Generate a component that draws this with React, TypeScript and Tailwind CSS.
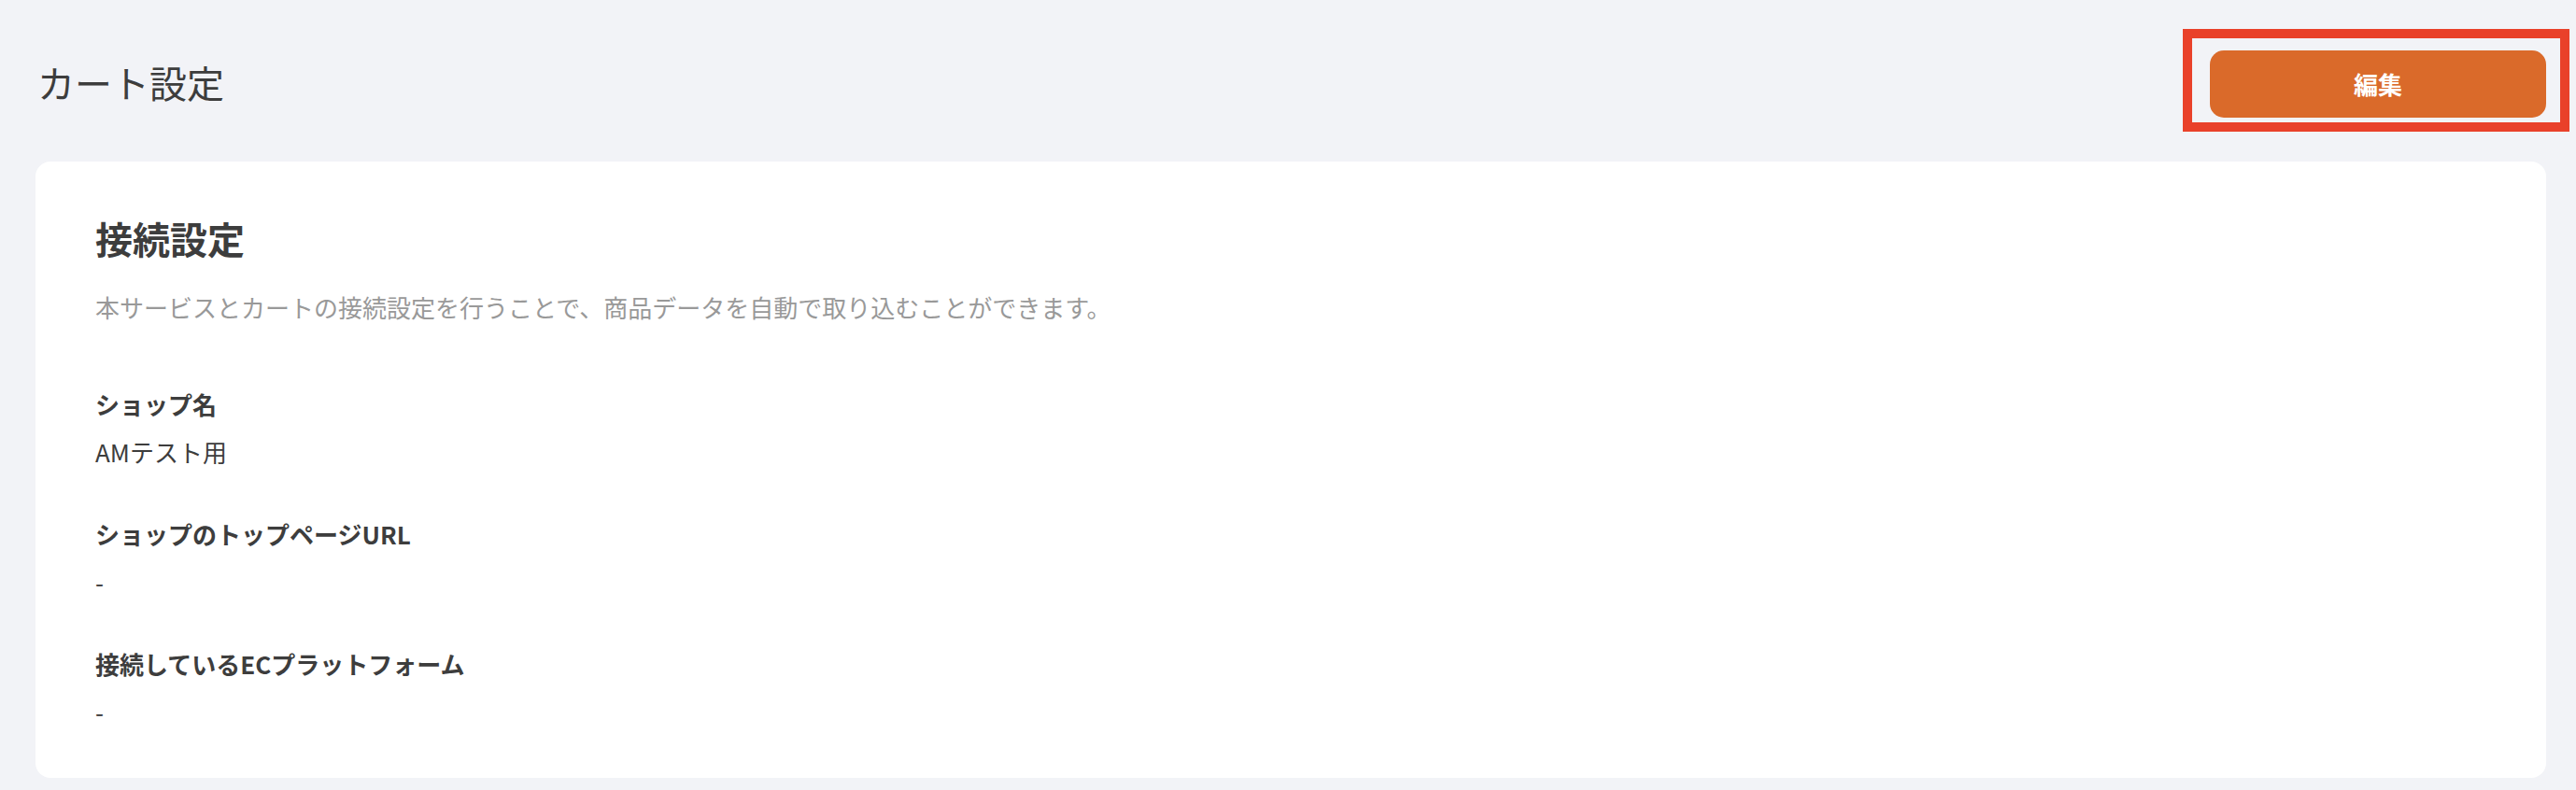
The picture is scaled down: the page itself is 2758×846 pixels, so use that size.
import React from 'react';

const FIELDS = [
  { label: 'ショップ名', value: 'AMテスト用' },
  { label: 'ショップのトップページURL', value: '-' },
  { label: '接続しているECプラットフォーム', value: '-' },
] as const;

const FONT = '[font-family:"Noto_Sans_CJK_JP","Noto_Sans",sans-serif]';

export default function App() {
  return (
    <div className={`min-h-[846px] bg-[#f2f3f7] pl-[38px] pr-[32px] pt-[54px] pb-[13px] text-[#3d3d3d] ${FONT}`}>
      {/* ヘッダー */}
      <div className="flex h-[72px] items-center justify-between">
        <h1 className="mb-[4px] pl-[2px] text-[40px] leading-[56px] font-normal text-[#3d3d3d]">カート設定</h1>
        <div className="relative">
          <button className="flex h-[72px] w-[360px] items-center justify-center rounded-[15px] bg-[#da6a2a] pb-[2px] text-[26px] font-bold text-white">
            編集
          </button>
          {/* 注釈の赤枠 */}
          <span className="pointer-events-none absolute -top-[23px] -right-[25px] -bottom-[15px] -left-[29px] border-[10px] border-[#e9412a]" />
        </div>
      </div>

      {/* 接続設定カード */}
      <div className="mt-[47px] rounded-[16px] bg-white px-[64px] pt-[62px] pb-[51px]">
        <h2 className="text-[40px] leading-[40px] font-bold text-[#3d3d3d]">接続設定</h2>
        <p className="mt-[36px] text-[26px] leading-[36px] text-[#999999]">
          本サービスとカートの接続設定を行うことで、商品データを自動で取り込むことができます。
        </p>

        <div className="mt-[68px] flex flex-col gap-[50px]">
          {FIELDS.map((f) => (
            <div key={f.label} className="flex flex-col gap-[13px]">
              <div className="text-[26px] leading-[36px] font-bold text-[#3d3d3d]">{f.label}</div>
              <div className="text-[26px] leading-[40px] text-[#3d3d3d]">{f.value}</div>
            </div>
          ))}
        </div>
      </div>
    </div>
  );
}
